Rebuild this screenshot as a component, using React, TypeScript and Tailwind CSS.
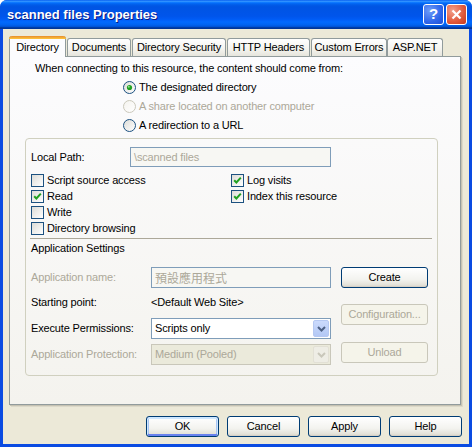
import React from "react";

const TABS = [
  { label: "Directory", w: "w-[57px]", active: true },
  { label: "Documents", w: "w-[64px]" },
  { label: "Directory Security", w: "w-[94px]" },
  { label: "HTTP Headers", w: "w-[83px]" },
  { label: "Custom Errors", w: "w-[76px]" },
  { label: "ASP.NET", w: "w-[56px]" },
];

function XpButton({ label, disabled, isDefault, className = "" }: {
  label: string; disabled?: boolean; isDefault?: boolean; className?: string;
}) {
  if (disabled) {
    return (
      <div className={`flex items-center justify-center border border-[#c9c7ba] rounded-[3px] bg-[#f5f4ea] text-[#aca899] ${className}`}>
        {label}
      </div>
    );
  }
  return (
    <div className={`flex items-center justify-center border border-[#003c74] rounded-[3px] bg-[linear-gradient(#ffffff,#f3f3ef_60%,#e3e1d8_90%,#d6d0c5)] text-black ${isDefault ? "shadow-[inset_0_1px_0_1px_#cee7ff,inset_0_-1px_0_1px_#6982ee,inset_0_0_0_2px_#a9c6f3]" : "shadow-[inset_0_-1px_0_#d6d0c5]"} ${className}`}>
      {label}
    </div>
  );
}

function Radio({ checked, disabled }: { checked?: boolean; disabled?: boolean }) {
  const id = disabled ? "rgd" : checked ? "rgc" : "rgn";
  return (
    <svg width="13" height="13" viewBox="0 0 13 13" className="shrink-0">
      <defs>
        <linearGradient id={id} x1="0" y1="0" x2="1" y2="1">
          <stop offset="0" stopColor={disabled ? "#f4f3ee" : "#dcdcd7"} />
          <stop offset="1" stopColor="#ffffff" />
        </linearGradient>
      </defs>
      <circle cx="6.5" cy="6.5" r="6" fill={`url(#${id})`} stroke={disabled ? "#cac8bb" : "#1c5180"} />
      {checked && <circle cx="6.5" cy="6.5" r="2.6" fill="#21a121" />}
      {checked && <circle cx="5.8" cy="5.8" r="1" fill="#8ee08e" />}
    </svg>
  );
}

function CheckBox({ checked }: { checked?: boolean }) {
  return (
    <span className="w-[13px] h-[13px] shrink-0 border border-[#1c5180] bg-[linear-gradient(135deg,#dcdcd7,#ffffff)] flex items-center justify-center">
      {checked && (
        <svg width="9" height="9" viewBox="0 0 9 9">
          <path d="M1.2 4.2 L3.4 6.5 L7.8 1.6" stroke="#21a121" strokeWidth="2" fill="none" />
        </svg>
      )}
    </span>
  );
}

function Chevron({ color }: { color: string }) {
  return (
    <svg width="9" height="6" viewBox="0 0 9 6">
      <path d="M1 1 L4.5 4.5 L8 1" stroke={color} strokeWidth="2" fill="none" />
    </svg>
  );
}

function Combo({ value, disabled }: { value: string; disabled?: boolean }) {
  return (
    <div className={`w-[180px] h-[21px] flex items-center border ${disabled ? "border-[#c9c7ba] bg-[#ebeadb] text-[#aca899]" : "border-[#7f9db9] bg-white text-black"}`}>
      <span className="flex-1 pl-[3px]">{value}</span>
      <span className={`w-[16px] h-[17px] mr-[1px] flex items-center justify-center rounded-[2px] ${disabled ? "bg-[#eeede5] border border-[#e2e0d5]" : "bg-[linear-gradient(#cbdafc,#b3c8f5)] border border-[#b5c8f2]"}`}>
        <Chevron color={disabled ? "#c9c7ba" : "#4d6185"} />
      </span>
    </div>
  );
}

function CheckRow({ label, checked }: { label: string; checked?: boolean }) {
  return (
    <div className="h-[16px] flex items-center gap-[3px]">
      <CheckBox checked={checked} />
      <span>{label}</span>
    </div>
  );
}

export default function App() {
  return (
    <div className="w-[472px] h-[447px] rounded-t-[7px] bg-[#0a4be2] flex flex-col font-['Liberation_Sans',Arial,sans-serif] text-[11px] tracking-[-0.15px] text-black overflow-hidden">
      {/* title bar */}
      <div className="h-[29px] shrink-0 flex items-start justify-between bg-[linear-gradient(#0058ee,#3593ff_4%,#288eff_6%,#127dff_8%,#036ffc_10%,#0262ee_14%,#0057e5_20%,#0054e3_24%,#0055eb_56%,#005bf5_66%,#026afe_76%,#0062ef_86%,#0052d6_92%,#0040ab_94%,#003092)]">
        <span className="pl-[7px] pt-[7px] text-white font-bold text-[13px] leading-[16px] tracking-normal [text-shadow:1px_1px_0_#0a1883]">
          scanned files Properties
        </span>
        <div className="flex gap-[2px] pt-[4px] pr-[5px]">
          <div className="w-[21px] h-[21px] rounded-[3px] border border-white bg-[radial-gradient(circle_at_30%_30%,#6e9cf8,#2f66ea_60%,#1e4fd6)] flex items-center justify-center text-white font-bold text-[15px]">
            ?
          </div>
          <div className="w-[21px] h-[21px] rounded-[3px] border border-white bg-[radial-gradient(circle_at_30%_30%,#f2a08b,#e0583a_60%,#c4391d)] flex items-center justify-center">
            <svg width="11" height="11" viewBox="0 0 11 11">
              <path d="M1.5 1.5 L9.5 9.5 M9.5 1.5 L1.5 9.5" stroke="white" strokeWidth="2.2" />
            </svg>
          </div>
        </div>
      </div>

      {/* body */}
      <div className="mx-[3px] mb-[3px] flex-1 bg-[#ece9d8] flex flex-col pt-[7px] pl-[6px]">
        <div className="h-[20px] flex items-end">
          {TABS.map((t, i) =>
            t.active ? (
              <div key={t.label} className={`${t.w} h-[21px] mb-[-1px] relative z-10 rounded-t-[3px] border-x border-[#919b9c] bg-[#fcfcfe] flex flex-col`}>
                <div className="h-[3px] rounded-t-[3px] bg-[linear-gradient(#e68b2c,#ffc73c)] -mx-px" />
                <div className="flex-1 flex items-center justify-center pb-[2px]">{t.label}</div>
              </div>
            ) : (
              <div key={t.label} className={`${t.w} h-[18px] ${i === 5 ? "" : "ml-[1px]"} rounded-t-[3px] border border-b-0 border-[#919b9c] bg-[linear-gradient(#ffffff,#f4f3ee_60%,#e6e5dd)] flex items-center justify-center`}>
                {t.label}
              </div>
            )
          )}
        </div>

        {/* tab panel */}
        <div className="w-[452px] h-[349px] border border-[#919b9c] bg-[linear-gradient(#fcfcfe,#f4f3ee)] shadow-[1px_1px_0_#c5c2b2,2px_2px_0_#dcd9c9] pt-[2px]">
          <div className="h-[19px] pl-[25px] flex items-center">
            When connecting to this resource, the content should come from:
          </div>
          <div className="h-[19px] pl-[113px] flex items-center gap-[3px]">
            <Radio checked />
            <span>The designated directory</span>
          </div>
          <div className="h-[19px] pl-[113px] flex items-center gap-[3px] text-[#aca899]">
            <Radio disabled />
            <span>A share located on another computer</span>
          </div>
          <div className="h-[19px] pl-[113px] flex items-center gap-[3px]">
            <Radio />
            <span>A redirection to a URL</span>
          </div>

          {/* group */}
          <div className="ml-[15px] mt-[3px] w-[413px] h-[238px] border border-[#d0d0bf] rounded-[4px] flex flex-col">
            <div className="mt-[8px] h-[20px] flex items-center">
              <span className="pl-[5px] w-[104px]">Local Path:</span>
              <div className="w-[201px] h-[20px] border border-[#7f9db9] bg-[#f7f7f3] text-[#aca899] flex items-center pl-[3px]">
                \scanned files
              </div>
            </div>

            <div className="mt-[5px] pl-[5px] flex">
              <div className="w-[200px] flex flex-col">
                <CheckRow label="Script source access" />
                <CheckRow label="Read" checked />
                <CheckRow label="Write" />
                <CheckRow label="Directory browsing" />
              </div>
              <div className="flex flex-col">
                <CheckRow label="Log visits" checked />
                <CheckRow label="Index this resource" checked />
              </div>
            </div>

            <div className="mt-[2px] ml-[4px] w-[402px] h-px bg-[#aca899]" />
            <div className="h-[19px] pl-[5px] flex items-center">Application Settings</div>

            <div className="pl-[5px] flex">
              <div className="w-[300px] flex flex-col">
                <div className="mt-[9px] h-[21px] flex items-center">
                  <span className="w-[120px] text-[#aca899]">Application name:</span>
                  <div className="w-[180px] h-[21px] border border-[#7f9db9] bg-[#f7f7f3] text-[#aca899] flex items-center pl-[3px] font-['Noto_Sans_CJK_TC',sans-serif] text-[12px] tracking-normal">
                    預設應用程式
                  </div>
                </div>
                <div className="mt-[4px] h-[20px] flex items-center">
                  <span className="w-[120px]">Starting point:</span>
                  <span>&lt;Default Web Site&gt;</span>
                </div>
                <div className="mt-[6px] h-[21px] flex items-center">
                  <span className="w-[120px]">Execute Permissions:</span>
                  <Combo value="Scripts only" />
                </div>
                <div className="mt-[5px] h-[21px] flex items-center">
                  <span className="w-[120px] text-[#aca899]">Application Protection:</span>
                  <Combo value="Medium (Pooled)" disabled />
                </div>
              </div>
              <div className="ml-[10px] flex flex-col">
                <XpButton label="Create" className="mt-[9px] w-[87px] h-[21px]" />
                <XpButton label="Configuration..." disabled className="mt-[16px] w-[87px] h-[21px]" />
                <XpButton label="Unload" disabled className="mt-[17px] w-[87px] h-[21px]" />
              </div>
            </div>
          </div>
        </div>

        {/* dialog buttons */}
        <div className="mt-[11px] pr-[7px] flex justify-end gap-[8px]">
          <XpButton label="OK" isDefault className="w-[73px] h-[21px]" />
          <XpButton label="Cancel" className="w-[73px] h-[21px]" />
          <XpButton label="Apply" className="w-[73px] h-[21px]" />
          <XpButton label="Help" className="w-[73px] h-[21px]" />
        </div>
      </div>
    </div>
  );
}
